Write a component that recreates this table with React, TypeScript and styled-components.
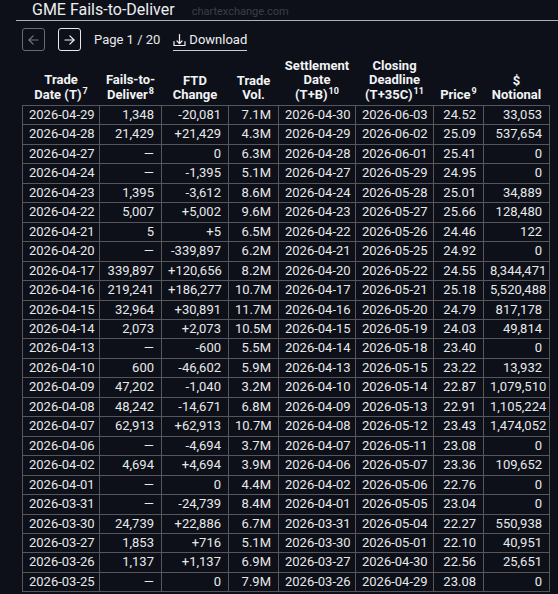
import styled, { createGlobalStyle } from 'styled-components';

const GlobalStyle = createGlobalStyle`
  body {
    margin: 0;
    background: #0d1018;
    font-family: Roboto, "Liberation Sans", sans-serif;
    color: #e8e9ea;
  }
`;

const Page = styled.div`
  width: 558px;
  height: 594px;
  overflow: hidden;
`;

const TitleBar = styled.div`
  margin-left: 16px;
  padding-left: 16px;
  height: 20px;
  line-height: 20px;
  border-bottom: 1px solid #aeb2b7;
  white-space: nowrap;
`;

const Title = styled.span`
  font-size: 16px;
  color: #eceef0;
`;

const Source = styled.span`
  margin-left: 17px;
  font-size: 11px;
  color: #3b3f47;
`;

const Toolbar = styled.div`
  display: flex;
  align-items: center;
  margin: 7px 0 0 22px;
  height: 23px;
  font-size: 13px;
`;

const NavButton = styled.button<{ $disabled?: boolean }>`
  width: 23px;
  height: 23px;
  padding: 0;
  margin-right: 13px;
  display: flex;
  align-items: center;
  justify-content: center;
  background: transparent;
  border: 1px solid ${(p) => (p.$disabled ? '#686b70' : '#e8e9ea')};
  border-radius: 3px;
  color: ${(p) => (p.$disabled ? '#74777c' : '#f2f3f4')};
`;

const PageLabel = styled.span`
  margin-right: 13px;
  color: #e8e9ea;
`;

const DownloadLink = styled.a`
  display: flex;
  align-items: center;
  gap: 3px;
  padding-bottom: 3px;
  margin-top: 4px;
  color: #eef0f2;
  text-decoration: none;
  border-bottom: 1px solid #c9ccd0;
`;

const Table = styled.table`
  margin: 8px 0 0 22px;
  border-collapse: collapse;
  table-layout: fixed;
  width: 527px;
  font-size: 13px;
`;

const Th = styled.th`
  padding: 0 2px 3px;
  line-height: 14px;
  font-weight: 700;
  text-align: center;
  vertical-align: bottom;
  color: #f2f3f4;
  white-space: nowrap;
`;

const Sup = styled.span`
  font-size: 9px;
  line-height: 9px;
  vertical-align: 5px;
  margin-left: 1px;
`;

const Td = styled.td<{ $left?: boolean }>`
  padding: 0 7px 0 6px;
  line-height: 18.45px;
  border: 1px solid #55575b;
  text-align: ${(p) => (p.$left ? 'left' : 'right')};
  color: #e8e9ea;
  white-space: nowrap;
`;

const Arrow = ({ dir }: { dir: 'left' | 'right' }) => (
  <svg width="13" height="12" viewBox="0 0 16 16" fill="none" stroke="currentColor" strokeWidth="1.6" strokeLinecap="round" strokeLinejoin="round">
    {dir === 'left' ? (
      <>
        <path d="M14 8H2" />
        <path d="M7.5 2.5L2 8l5.5 5.5" />
      </>
    ) : (
      <>
        <path d="M2 8h12" />
        <path d="M8.5 2.5L14 8l-5.5 5.5" />
      </>
    )}
  </svg>
);

const DownloadIcon = () => (
  <svg width="13" height="14" viewBox="0 0 13 14" fill="none" stroke="currentColor" strokeWidth="1.2" strokeLinecap="round" strokeLinejoin="round">
    <path d="M6.5 1.5v9" />
    <path d="M4 8l2.5 2.5L9 8" />
    <path d="M1 8.5v4h11v-4" />
  </svg>
);

type Row = [string, string, string, string, string, string, string, string];

const rows: Row[] = [
  ['2026-04-29', '1,348', '-20,081', '7.1M', '2026-04-30', '2026-06-03', '24.52', '33,053'],
  ['2026-04-28', '21,429', '+21,429', '4.3M', '2026-04-29', '2026-06-02', '25.09', '537,654'],
  ['2026-04-27', '—', '0', '6.3M', '2026-04-28', '2026-06-01', '25.41', '0'],
  ['2026-04-24', '—', '-1,395', '5.1M', '2026-04-27', '2026-05-29', '24.95', '0'],
  ['2026-04-23', '1,395', '-3,612', '8.6M', '2026-04-24', '2026-05-28', '25.01', '34,889'],
  ['2026-04-22', '5,007', '+5,002', '9.6M', '2026-04-23', '2026-05-27', '25.66', '128,480'],
  ['2026-04-21', '5', '+5', '6.5M', '2026-04-22', '2026-05-26', '24.46', '122'],
  ['2026-04-20', '—', '-339,897', '6.2M', '2026-04-21', '2026-05-25', '24.92', '0'],
  ['2026-04-17', '339,897', '+120,656', '8.2M', '2026-04-20', '2026-05-22', '24.55', '8,344,471'],
  ['2026-04-16', '219,241', '+186,277', '10.7M', '2026-04-17', '2026-05-21', '25.18', '5,520,488'],
  ['2026-04-15', '32,964', '+30,891', '11.7M', '2026-04-16', '2026-05-20', '24.79', '817,178'],
  ['2026-04-14', '2,073', '+2,073', '10.5M', '2026-04-15', '2026-05-19', '24.03', '49,814'],
  ['2026-04-13', '—', '-600', '5.5M', '2026-04-14', '2026-05-18', '23.40', '0'],
  ['2026-04-10', '600', '-46,602', '5.9M', '2026-04-13', '2026-05-15', '23.22', '13,932'],
  ['2026-04-09', '47,202', '-1,040', '3.2M', '2026-04-10', '2026-05-14', '22.87', '1,079,510'],
  ['2026-04-08', '48,242', '-14,671', '6.8M', '2026-04-09', '2026-05-13', '22.91', '1,105,224'],
  ['2026-04-07', '62,913', '+62,913', '10.7M', '2026-04-08', '2026-05-12', '23.43', '1,474,052'],
  ['2026-04-06', '—', '-4,694', '3.7M', '2026-04-07', '2026-05-11', '23.08', '0'],
  ['2026-04-02', '4,694', '+4,694', '3.9M', '2026-04-06', '2026-05-07', '23.36', '109,652'],
  ['2026-04-01', '—', '0', '4.4M', '2026-04-02', '2026-05-06', '22.76', '0'],
  ['2026-03-31', '—', '-24,739', '8.4M', '2026-04-01', '2026-05-05', '23.04', '0'],
  ['2026-03-30', '24,739', '+22,886', '6.7M', '2026-03-31', '2026-05-04', '22.27', '550,938'],
  ['2026-03-27', '1,853', '+716', '5.1M', '2026-03-30', '2026-05-01', '22.10', '40,951'],
  ['2026-03-26', '1,137', '+1,137', '6.9M', '2026-03-27', '2026-04-30', '22.56', '25,651'],
  ['2026-03-25', '—', '0', '7.9M', '2026-03-26', '2026-04-29', '23.08', '0'],
];

const colWidths = [77, 62, 67, 50, 77, 78, 50, 66];
const leftCols = [0, 4, 5];

const App = () => {
  return (
    <Page>
      <GlobalStyle />
      <TitleBar>
        <Title>GME Fails-to-Deliver</Title>
        <Source>chartexchange.com</Source>
      </TitleBar>
      <Toolbar>
        <NavButton $disabled aria-label="Previous page">
          <Arrow dir="left" />
        </NavButton>
        <NavButton aria-label="Next page">
          <Arrow dir="right" />
        </NavButton>
        <PageLabel>Page 1 / 20</PageLabel>
        <DownloadLink href="#">
          <DownloadIcon />
          Download
        </DownloadLink>
      </Toolbar>
      <Table>
        <colgroup>
          {colWidths.map((w, i) => (
            <col key={i} style={{ width: w }} />
          ))}
        </colgroup>
        <thead>
          <tr>
            <Th>
              Trade
              <br />
              Date (T)<Sup>7</Sup>
            </Th>
            <Th>
              Fails-to-
              <br />
              Deliver<Sup>8</Sup>
            </Th>
            <Th>
              FTD
              <br />
              Change
            </Th>
            <Th>
              Trade
              <br />
              Vol.
            </Th>
            <Th>
              Settlement
              <br />
              Date
              <br />
              (T+B)<Sup>10</Sup>
            </Th>
            <Th>
              Closing
              <br />
              Deadline
              <br />
              (T+35C)<Sup>11</Sup>
            </Th>
            <Th>
              Price<Sup>9</Sup>
            </Th>
            <Th>
              $
              <br />
              Notional
            </Th>
          </tr>
        </thead>
        <tbody>
          {rows.map((row) => (
            <tr key={row[0]}>
              {row.map((cell, i) => (
                <Td key={i} $left={leftCols.includes(i)}>
                  {cell}
                </Td>
              ))}
            </tr>
          ))}
        </tbody>
      </Table>
    </Page>
  );
};

export default App;
